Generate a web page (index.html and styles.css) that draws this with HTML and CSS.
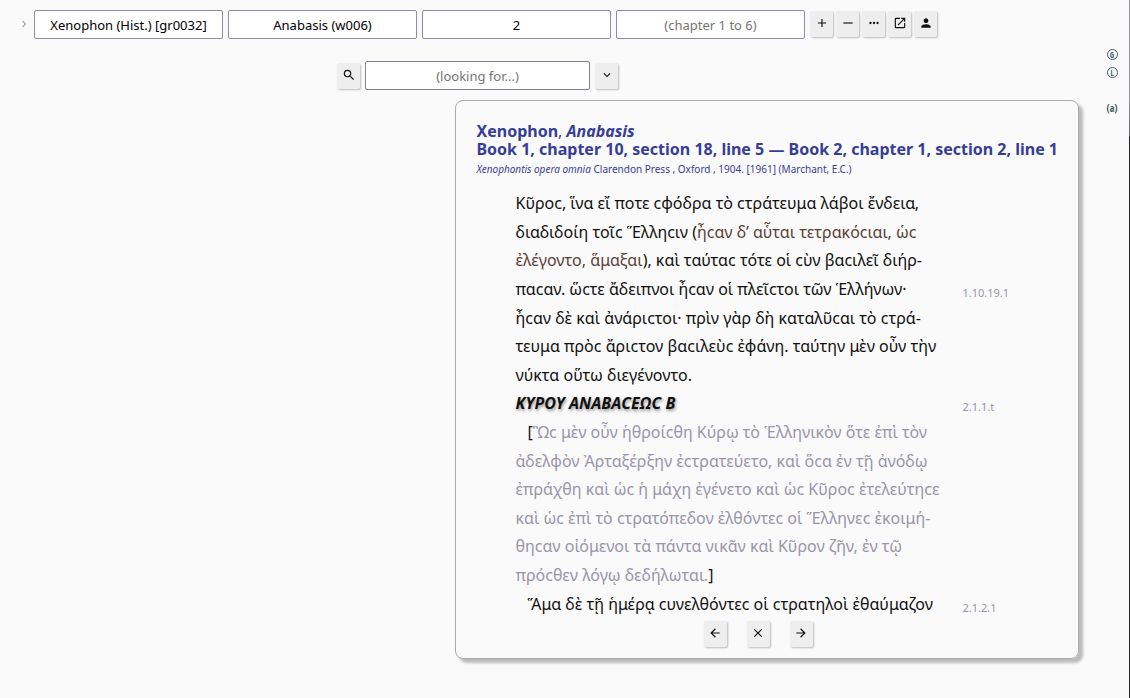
FILE: index.html
```html
<!DOCTYPE html>
<html lang="en">
<head>
<meta charset="utf-8">
<meta name="viewport" content="width=device-width, initial-scale=1">
<title>Xenophon, Anabasis</title>
<link rel="stylesheet" href="styles.css">
</head>
<body>
<div class="page">
  <main class="content">
    <nav class="bar">
      <button class="expander" type="button" aria-label="Expand"><svg viewBox="0 0 6 8"><path d="M1.5 1l3 3-3 3"/></svg></button>
      <div class="fields">
        <input class="field" type="text" aria-label="Author" value="Xenophon (Hist.) [gr0032]">
        <input class="field" type="text" aria-label="Work" value="Anabasis (w006)">
        <input class="field" type="text" aria-label="Book" value="2">
        <input class="field" type="text" aria-label="Chapter" placeholder="(chapter 1 to 6)">
      </div>
      <div class="tools">
        <button class="btn" type="button" aria-label="Add"><svg class="icon" viewBox="0 0 24 24"><path d="M19 13h-6v6h-2v-6H5v-2h6V5h2v6h6v2z"/></svg></button>
        <button class="btn" type="button" aria-label="Remove"><svg class="icon" viewBox="0 0 24 24"><path d="M20 13H4v-2h16v2z"/></svg></button>
        <button class="btn" type="button" aria-label="More"><svg class="icon" viewBox="0 0 24 24"><path d="M6 10a2 2 0 100 4 2 2 0 000-4zm12 0a2 2 0 100 4 2 2 0 000-4zm-6 0a2 2 0 100 4 2 2 0 000-4z"/></svg></button>
        <button class="btn" type="button" aria-label="Open"><svg class="icon" viewBox="0 0 24 24"><path d="M19 19H5V5h7V3H5a2 2 0 00-2 2v14a2 2 0 002 2h14c1.100 0 2-.9 2-2v-7h-2v7zM14 3v2h3.590l-9.830 9.830 1.410 1.410L19 6.410V10h2V3h-7z"/></svg></button>
        <button class="btn" type="button" aria-label="Account"><svg class="icon" viewBox="0 0 24 24"><path d="M12 12c2.210 0 4-1.790 4-4s-1.790-4-4-4-4 1.790-4 4 1.790 4 4 4zm0 2c-2.670 0-8 1.340-8 4v2h16v-2c0-2.660-5.330-4-8-4z"/></svg></button>
      </div>
    </nav>
    <form class="search">
      <button class="btn" type="button" aria-label="Search"><svg class="icon" viewBox="0 0 24 24"><path d="M15.500 14h-.79l-.28-.27A6.470 6.470 0 0016 9.500 6.500 6.500 0 109.500 16c1.610 0 3.090-.59 4.230-1.570l.27.28v.79l5 4.990L20.490 19l-4.990-5zm-6 0C7.010 14 5 11.990 5 9.500S7.010 5 9.500 5 14 7.010 14 9.500 11.990 14 9.500 14z"/></svg></button>
      <input class="field field-search" type="text" aria-label="Search text" placeholder="(looking for...)">
      <button class="btn" type="button" aria-label="Options"><svg class="icon" viewBox="0 0 24 24"><path d="M16.590 8.590L12 13.170 7.410 8.590 6 10l6 6 6-6z"/></svg></button>
    </form>
    <article class="card">
      <header class="head">
        <h1 class="title"><b>Xenophon</b>, <b><i>Anabasis</i></b><br><b>Book 1, chapter 10, section 18, line 5 — Book 2, chapter 1, section 2, line 1</b></h1>
        <p class="source"><i>Xenophontis opera omnia</i> Clarendon Press , Oxford , 1904. [1961] (Marchant, E.C.)</p>
      </header>
      <div class="passage" lang="el">
        <p class="line"><span>Κῦροϲ, ἵνα εἴ ποτε ϲφόδρα τὸ ϲτράτευμα λάβοι ἔνδεια,</span></p>
        <p class="line"><span>διαδιδοίη τοῖϲ Ἕλληϲιν (<span class="aside">ἦϲαν δ’ αὗται τετρακόϲιαι, ὡϲ</span></span></p>
        <p class="line"><span><span class="aside">ἐλέγοντο, ἅμαξαι</span>), καὶ ταύταϲ τότε οἱ ϲὺν βαϲιλεῖ διήρ-</span></p>
        <p class="line"><span>παϲαν. ὥϲτε ἄδειπνοι ἦϲαν οἱ πλεῖϲτοι τῶν Ἑλλήνων·</span><span class="ref">1.10.19.1</span></p>
        <p class="line"><span>ἦϲαν δὲ καὶ ἀνάριϲτοι· πρὶν γὰρ δὴ καταλῦϲαι τὸ ϲτρά-</span></p>
        <p class="line"><span>τευμα πρὸϲ ἄριϲτον βαϲιλεὺϲ ἐφάνη. ταύτην μὲν οὖν τὴν</span></p>
        <p class="line"><span>νύκτα οὕτω διεγένοντο.</span></p>
        <p class="line"><span class="book">ΚΥΡΟΥ ΑΝΑΒΑϹΕΩϹ Β</span><span class="ref">2.1.1.t</span></p>
        <p class="line"><span class="indent">[<span class="deleted">Ὣϲ μὲν οὖν ἡθροίϲθη Κύρῳ τὸ Ἑλληνικὸν ὅτε ἐπὶ τὸν</span></span></p>
        <p class="line"><span class="deleted">ἀδελφὸν Ἀρταξέρξην ἐϲτρατεύετο, καὶ ὅϲα ἐν τῇ ἀνόδῳ</span></p>
        <p class="line"><span class="deleted">ἐπράχθη καὶ ὡϲ ἡ μάχη ἐγένετο καὶ ὡϲ Κῦροϲ ἐτελεύτηϲε</span></p>
        <p class="line"><span class="deleted">καὶ ὡϲ ἐπὶ τὸ ϲτρατόπεδον ἐλθόντεϲ οἱ Ἕλληνεϲ ἐκοιμή-</span></p>
        <p class="line"><span class="deleted">θηϲαν οἰόμενοι τὰ πάντα νικᾶν καὶ Κῦρον ζῆν, ἐν τῷ</span></p>
        <p class="line"><span><span class="deleted">πρόϲθεν λόγῳ δεδήλωται.</span>]</span></p>
        <p class="line"><span class="indent">Ἅμα δὲ τῇ ἡμέρᾳ ϲυνελθόντεϲ οἱ ϲτρατηλοὶ ἐθαύμαζον</span><span class="ref">2.1.2.1</span></p>
      </div>
      <footer class="pager">
        <button class="btn" type="button" aria-label="Previous"><svg class="icon" viewBox="0 0 24 24"><path d="M20 11H7.830l5.590-5.590L12 4l-8 8 8 8 1.410-1.410L7.830 13H20v-2z"/></svg></button>
        <button class="btn" type="button" aria-label="Close"><svg class="icon" viewBox="0 0 24 24"><path d="M19 6.410L17.590 5 12 10.590 6.410 5 5 6.410 10.590 12 5 17.590 6.410 19 12 13.410 17.590 19 19 17.590 13.410 12z"/></svg></button>
        <button class="btn" type="button" aria-label="Next"><svg class="icon" viewBox="0 0 24 24"><path d="M12 4l-1.410 1.410L16.170 11H4v2h12.170l-5.580 5.590L12 20l8-8z"/></svg></button>
      </footer>
    </article>
  </main>
  <aside class="side">
    <a class="mark round" href="#greek">G</a>
    <a class="mark round" href="#latin">L</a>
    <a class="mark last" href="#authors">(a)</a>
  </aside>
  <div class="edge"></div>
</div>
</body>
</html>
```
FILE: styles.css
```css
* { box-sizing: border-box; }
body {
  margin: 0;
  background: #fafafa;
  color: #111;
  font: 16px/18px "Noto Sans", sans-serif;
}
h1, p { margin: 0; }
.page { display: flex; min-height: 100vh; }
.content {
  flex: 1;
  display: flex;
  flex-direction: column;
  padding: 10px 16px 39px 21px;
}
.bar { display: flex; align-items: flex-start; gap: 5px; }
.expander {
  width: 8px;
  height: 27px;
  padding: 0;
  border: 0;
  background: none;
}
.expander svg { display: block; width: 6px; height: 8px; fill: none; stroke: #777; }
.fields { display: flex; gap: 5px; }
.field {
  width: 189px;
  height: 29px;
  padding: 0 8px;
  border: 1px solid #8f8ba8;
  border-radius: 2px;
  background: #fff;
  color: #000;
  font: 13px/18px "Noto Sans", sans-serif;
  text-align: center;
}
.field::placeholder { color: #757575; opacity: 1; }
.tools { display: flex; gap: 3px; padding-top: 1px; }
.btn {
  display: flex;
  justify-content: center;
  width: 23px;
  height: 26px;
  padding: 5px 0 0;
  border: 0;
  border-radius: 2px;
  background: #eee;
  box-shadow: 1px 1px 2px #bbb;
}
.icon { width: 14px; height: 14px; fill: #111; }
.search { display: flex; align-items: center; gap: 5px; margin: 22px 0 10px; padding-left: 316px; }
.field-search { width: 225px; border-color: #85818f; }
.card {
  flex: 1;
  align-self: flex-end;
  display: flex;
  flex-direction: column;
  padding: 21px 20px 11px;
  border: 1px solid #aaa;
  border-radius: 8px;
  box-shadow: 4px 4px 3px #bbb;
}
.head { color: #363d98; }
.title { font-size: 16px; font-weight: 400; }
.source { padding-top: 2px; font-size: 10px; }
.passage {
  flex: 1;
  display: grid;
  grid-auto-rows: 1fr;
  padding: 11px 0 3px 39px;
}
.line { display: grid; grid-template-columns: 447px 1fr; align-items: center; line-height: 28px; }
.indent { padding-left: 12px; }
.aside { color: #5d4037; }
.deleted { color: #9995aa; }
.book { font-weight: 700; font-style: italic; text-shadow: 1px 2px 3px #999; }
.ref { padding-top: 8px; color: #9995aa; font-size: 11px; line-height: 20px; }
.pager { display: flex; justify-content: center; gap: 20px; padding-right: 18px; }
.side {
  display: flex;
  flex-direction: column;
  align-items: center;
  gap: 7px;
  width: 34px;
  padding-top: 49px;
}
.mark { color: #455a64; font: 700 9px/11px "Open Sans Condensed", "Noto Sans", sans-serif; text-decoration: none; }
.round { width: 11px; border: 1px solid #455a64; border-radius: 50%; font-size: 8px; line-height: 9px; text-align: center; }
.last { padding-top: 18px; font-size: 10px; }
.edge { width: 1px; background: linear-gradient(#8a94a6 0 100px, #5c6478 136px, #222 137px); }
```
